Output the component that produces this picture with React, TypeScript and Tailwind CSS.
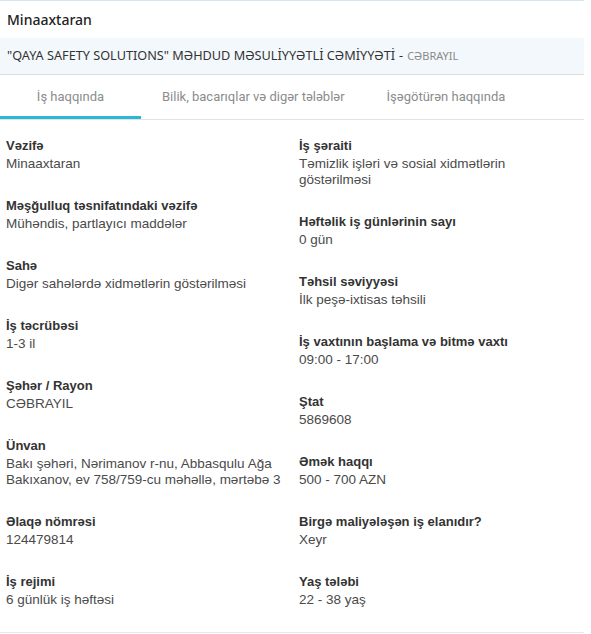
import React from "react";

const leftItems = [
  { label: "Vəzifə", value: "Minaaxtaran" },
  { label: "Məşğulluq təsnifatındaki vəzifə", value: "Mühəndis, partlayıcı maddələr" },
  { label: "Sahə", value: "Digər sahələrdə xidmətlərin göstərilməsi" },
  { label: "İş təcrübəsi", value: "1-3 il" },
  { label: "Şəhər / Rayon", value: "CƏBRAYIL" },
  { label: "Ünvan", value: "Bakı şəhəri, Nərimanov r-nu, Abbasqulu Ağa Bakıxanov, ev 758/759-cu məhəllə, mərtəbə 3" },
  { label: "Əlaqə nömrəsi", value: "124479814" },
  { label: "İş rejimi", value: "6 günlük iş həftəsi" },
];

const rightItems = [
  { label: "İş şəraiti", value: "Təmizlik işləri və sosial xidmətlərin göstərilməsi" },
  { label: "Həftəlik iş günlərinin sayı", value: "0 gün" },
  { label: "Təhsil səviyyəsi", value: "İlk peşə-ixtisas təhsili" },
  { label: "İş vaxtının başlama və bitmə vaxtı", value: "09:00 - 17:00" },
  { label: "Ştat", value: "5869608" },
  { label: "Əmək haqqı", value: "500 - 700 AZN" },
  { label: "Birgə maliyələşən iş elanıdır?", value: "Xeyr" },
  { label: "Yaş tələbi", value: "22 - 38 yaş" },
];

function Field({ label, value }: { label: string; value: string }) {
  return (
    <div className="mb-[24px]">
      <div className="text-[13px] leading-5 font-bold text-[#333]">{label}</div>
      <div className="text-[13.5px] leading-4 text-[#4a4a4a]">{value}</div>
    </div>
  );
}

export default function App() {
  const tabs = ["İş haqqında", "Bilik, bacarıqlar və digər tələblər", "İşəgötürən haqqında"];

  return (
    <div className="w-[584px] bg-white border-t border-[#d5e6f3]">
      {/* Title */}
      <div className="h-[37px] flex items-center px-[7px] [font-family:'Noto_Sans',sans-serif] text-[14px] font-medium text-[#222]">
        Minaaxtaran
      </div>

      {/* Company */}
      <div className="h-[37px] flex items-center px-[7px] bg-[#f3f8fc] border-b border-[#dcdcdc] [font-family:'Noto_Sans',sans-serif] text-[12.7px] text-[#333]">
        "QAYA SAFETY SOLUTIONS" MƏHDUD MƏSULİYYƏTLİ CƏMİYYƏTİ
        <span className="ml-1">-</span>
        <span className="ml-1 text-[11px] text-[#8a8a8a]">CƏBRAYIL</span>
      </div>

      {/* Tabs */}
      <div className="flex h-[45px] border-b border-[#e3e3e3] [font-family:Roboto,sans-serif] text-[13px] text-[#8c8c8c]">
        {tabs.map((t, i) => (
          <div
            key={t}
            className={
              i === 0
                ? "w-[141px] flex items-center justify-center border-b-[3px] border-[#2cb6d8] pt-[3px]"
                : "px-[21px] flex items-center"
            }
          >
            {t}
          </div>
        ))}
      </div>

      {/* Details */}
      <div className="flex gap-x-[14px] px-[6px] pt-[16px] border-b border-[#e8e8e8] [font-family:'Liberation_Sans',Arial,sans-serif]">
        <div className="w-[279px] flex flex-col">
          {leftItems.map((f) => (
            <Field key={f.label} {...f} />
          ))}
        </div>
        <div className="w-[279px] flex flex-col">
          {rightItems.map((f) => (
            <Field key={f.label} {...f} />
          ))}
        </div>
      </div>
    </div>
  );
}
